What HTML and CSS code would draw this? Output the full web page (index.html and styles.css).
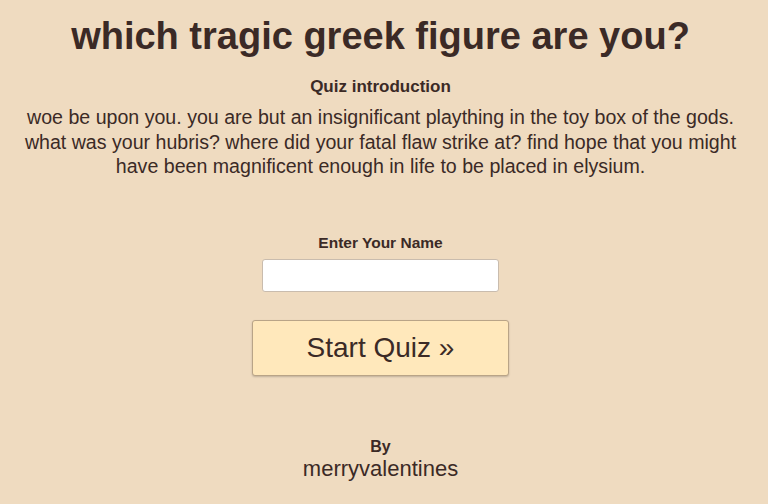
FILE: index.html
```html
<!DOCTYPE html>
<html>
<head>
<meta charset="utf-8">
<link rel="stylesheet" href="styles.css">
</head>
<body>
<main class="page">
  <h1 class="title">which tragic greek figure are you?</h1>
  <h2 class="intro-head">Quiz introduction</h2>
  <p class="intro">woe be upon you. you are but an insignificant plaything in the toy box of the gods. what was your hubris? where did your fatal flaw strike at? find hope that you might have been magnificent enough in life to be placed in elysium.</p>
  <form class="start">
    <label class="name-label" for="name">Enter Your Name</label>
    <input class="name-input" id="name" type="text">
    <button class="start-btn" type="button">Start Quiz »</button>
  </form>
  <footer class="by">
    <div class="by-label">By</div>
    <div class="by-name">merryvalentines</div>
  </footer>
</main>
</body>
</html>
```
FILE: styles.css
```css
html, body {
  margin: 0;
  padding: 0;
  background: #efdbc0;
  color: #3b2a26;
  font-family: "Liberation Sans", Arial, sans-serif;
}
.page {
  display: flex;
  flex-direction: column;
  align-items: center;
  text-align: center;
  padding: 14px 24px 0 17px;
}
.title {
  margin: 0;
  font-size: 38px;
  line-height: 44px;
  font-weight: bold;
}
.intro-head {
  margin: 19px 0 0;
  font-size: 17px;
  line-height: 20px;
  font-weight: bold;
}
.intro {
  margin: 8px 0 0;
  font-size: 19.6px;
  line-height: 24.5px;
  max-width: 740px;
}
.start {
  display: flex;
  flex-direction: column;
  align-items: center;
  margin-top: 55px;
}
.name-label {
  font-size: 15.5px;
  font-weight: bold;
  line-height: 18px;
}
.name-input {
  box-sizing: border-box;
  margin-top: 7px;
  width: 237px;
  height: 33px;
  border: 1px solid #c9bcae;
  border-radius: 3px;
  background: #fff;
}
.start-btn {
  box-sizing: border-box;
  margin-top: 28px;
  width: 257px;
  height: 56px;
  background: #ffe8bb;
  border: 1px solid #b9a487;
  border-radius: 3px;
  box-shadow: 0 1px 2px rgba(0,0,0,0.2);
  color: #3b2a26;
  font-family: "Liberation Sans", Arial, sans-serif;
  font-size: 28px;
}
.by {
  margin-top: 61px;
}
.by-label {
  font-size: 16px;
  font-weight: bold;
  line-height: 20px;
}
.by-name {
  font-size: 22px;
  line-height: 24px;
}
```
